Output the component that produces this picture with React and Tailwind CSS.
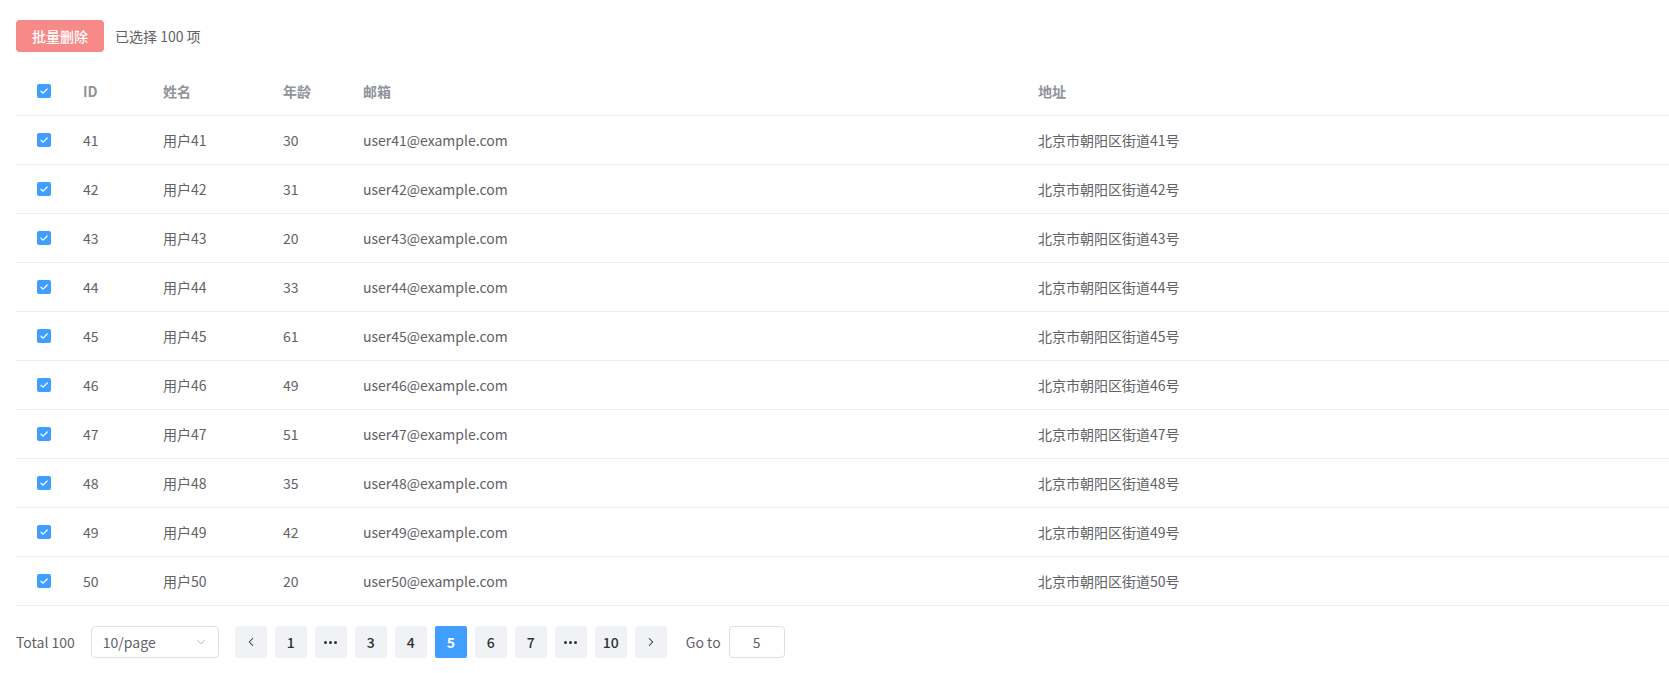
import { ChevronLeft, ChevronRight, ChevronDown } from 'lucide-react'

const rows = [
  [41, 30], [42, 31], [43, 20], [44, 33], [45, 61],
  [46, 49], [47, 51], [48, 35], [49, 42], [50, 20],
].map(([id, age]) => ({
  id,
  name: `用户${id}`,
  age,
  email: `user${id}@example.com`,
  address: `北京市朝阳区街道${id}号`,
}))

function Checkbox(){
  return (
    <span className="inline-flex h-[14px] w-[14px] items-center justify-center rounded-[2px] bg-[#409eff]">
      <svg viewBox="0 0 14 14" className="h-[14px] w-[14px]" fill="none">
        <path d="M4 7.2 L6.1 9.2 L10.2 5" stroke="white" strokeWidth="1.2" strokeLinecap="round" strokeLinejoin="round" />
      </svg>
    </span>
  )
}

function PageBtn({ children, active }){
  return (
    <button className={
      active
        ? "flex h-[32px] w-[32px] items-center justify-center rounded-[2px] bg-[#409eff] text-[14px] font-bold text-white"
        : "flex h-[32px] w-[32px] items-center justify-center rounded-[2px] bg-[#f0f2f5] text-[14px] font-medium text-[#303133]"
    }>
      {children}
    </button>
  )
}

function Dots(){
  return (
    <span className="flex gap-[2px]">
      <span className="h-[3px] w-[3px] rounded-full bg-[#303133]" />
      <span className="h-[3px] w-[3px] rounded-full bg-[#303133]" />
      <span className="h-[3px] w-[3px] rounded-full bg-[#303133]" />
    </span>
  )
}

export default function App(){
  return (
    <div className="min-h-screen bg-white pl-4 pt-5 text-[14px] text-[#606266]" style={{ fontFamily: '"Noto Sans CJK SC", "Noto Sans", sans-serif' }}>
      {/* toolbar */}
      <div className="flex h-[32px] items-center">
        <button className="h-[32px] w-[88px] rounded-[4px] bg-[#f78989] text-[14px] font-medium text-white">
          批量删除
        </button>
        <span className="ml-[11px]">已选择 100 项</span>
      </div>

      {/* table */}
      <div className="mt-[15px] w-full">
        <div className="flex h-[49px] items-center border-b border-[#ebeef5] font-bold text-[#909399]">
          <div className="flex w-[55px] justify-center"><Checkbox /></div>
          <div className="w-[80px] px-3">ID</div>
          <div className="w-[120px] px-3">姓名</div>
          <div className="w-[80px] px-3">年龄</div>
          <div className="w-[675px] px-3">邮箱</div>
          <div className="flex-1 px-3">地址</div>
        </div>
        {rows.map(r => (
          <div key={r.id} className="flex h-[49px] items-center border-b border-[#ebeef5]">
            <div className="flex w-[55px] justify-center"><Checkbox /></div>
            <div className="w-[80px] px-3">{r.id}</div>
            <div className="w-[120px] px-3">{r.name}</div>
            <div className="w-[80px] px-3">{r.age}</div>
            <div className="w-[675px] px-3">{r.email}</div>
            <div className="flex-1 px-3">{r.address}</div>
          </div>
        ))}
      </div>

      {/* pagination */}
      <div className="mt-[20px] flex h-[32px] items-center">
        <span>Total 100</span>
        <div className="ml-4 flex h-[32px] w-[128px] items-center justify-between rounded-[4px] border border-[#dcdfe6] pl-[11px] pr-[10px]">
          <span>10/page</span>
          <ChevronDown size={14} strokeWidth={1.5} className="text-[#a8abb2]" />
        </div>
        <div className="ml-4 flex gap-2">
          <PageBtn><ChevronLeft size={14} strokeWidth={1.8} className="text-[#303133]" /></PageBtn>
          <PageBtn>1</PageBtn>
          <PageBtn><Dots /></PageBtn>
          <PageBtn>3</PageBtn>
          <PageBtn>4</PageBtn>
          <PageBtn active>5</PageBtn>
          <PageBtn>6</PageBtn>
          <PageBtn>7</PageBtn>
          <PageBtn><Dots /></PageBtn>
          <PageBtn>10</PageBtn>
          <PageBtn><ChevronRight size={14} strokeWidth={1.8} className="text-[#303133]" /></PageBtn>
        </div>
        <span className="ml-[19px]">Go to</span>
        <div className="ml-2 flex h-[32px] w-[56px] items-center justify-center rounded-[4px] border border-[#dcdfe6] text-[#606266]">
          5
        </div>
      </div>
    </div>
  )
}
